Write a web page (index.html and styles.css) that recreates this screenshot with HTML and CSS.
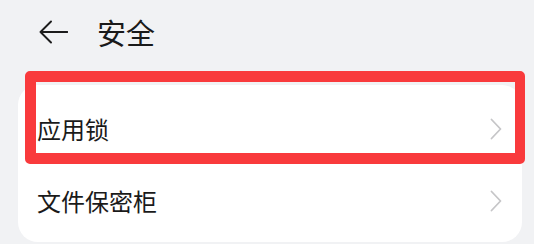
FILE: index.html
```html
<!DOCTYPE html>
<html lang="zh-CN">
<head>
  <meta charset="UTF-8" />
  <meta name="viewport" content="width=device-width, initial-scale=1.0"/>
  <title>安全</title>
  <link rel="stylesheet" href="styles.css">
</head>
<body>
  <div class="header">
    <svg class="back" width="30" height="24" viewBox="0 0 30 24">
      <path d="M13 1.5 L2.5 12 L13 22.5 M2.5 12 H29.5" fill="none" stroke="#1c1c1c" stroke-width="1.9" stroke-linecap="round" stroke-linejoin="round"/>
    </svg>
    <h1 class="title">安全</h1>
  </div>

  <!-- Settings list -->
  <div class="card">
    <div class="highlight"></div>
    <div class="row">
      <span class="label">应用锁</span>
      <svg class="chevron" width="12" height="22" viewBox="0 0 12 22">
        <path d="M1.5 1.5 L10.5 11 L1.5 20.5" fill="none" stroke="#c6c6c8" stroke-width="1.8" stroke-linecap="round" stroke-linejoin="round"/>
      </svg>
    </div>
    <div class="row">
      <span class="label">文件保密柜</span>
      <svg class="chevron" width="12" height="22" viewBox="0 0 12 22">
        <path d="M1.5 1.5 L10.5 11 L1.5 20.5" fill="none" stroke="#c6c6c8" stroke-width="1.8" stroke-linecap="round" stroke-linejoin="round"/>
      </svg>
    </div>
  </div>
</body>
</html>
```

FILE: styles.css
```css
body {
  font-family: "Noto Sans CJK SC", "Noto Sans", sans-serif;
  background-color: #f1f2f4;
  margin: 0;
  padding: 0;
  color: #1a1a1a;
}
.header {
  display: flex;
  align-items: center;
  height: 64px;
  padding-left: 38px;
}
.back {
  display: block;
  margin-right: 29px;
}
.title {
  margin: 0;
  font-size: 29px;
  font-weight: 400;
  line-height: 1;
}
.card {
  position: relative;
  margin: 21px 12px 0 18px;
  background-color: white;
  border-radius: 20px;
  padding: 8px 0 5px;
}
.row {
  display: flex;
  align-items: center;
  justify-content: space-between;
  height: 72px;
  padding: 0 20px 0 19px;
}
.label {
  font-size: 24px;
  line-height: 1;
}
.chevron {
  display: block;
}
.highlight {
  position: absolute;
  left: 7px;
  top: -14px;
  width: 500px;
  height: 93px;
  box-sizing: border-box;
  border: 11px solid #f93a3c;
  border-right-width: 10px;
  border-radius: 5px;
  pointer-events: none;
}
```
